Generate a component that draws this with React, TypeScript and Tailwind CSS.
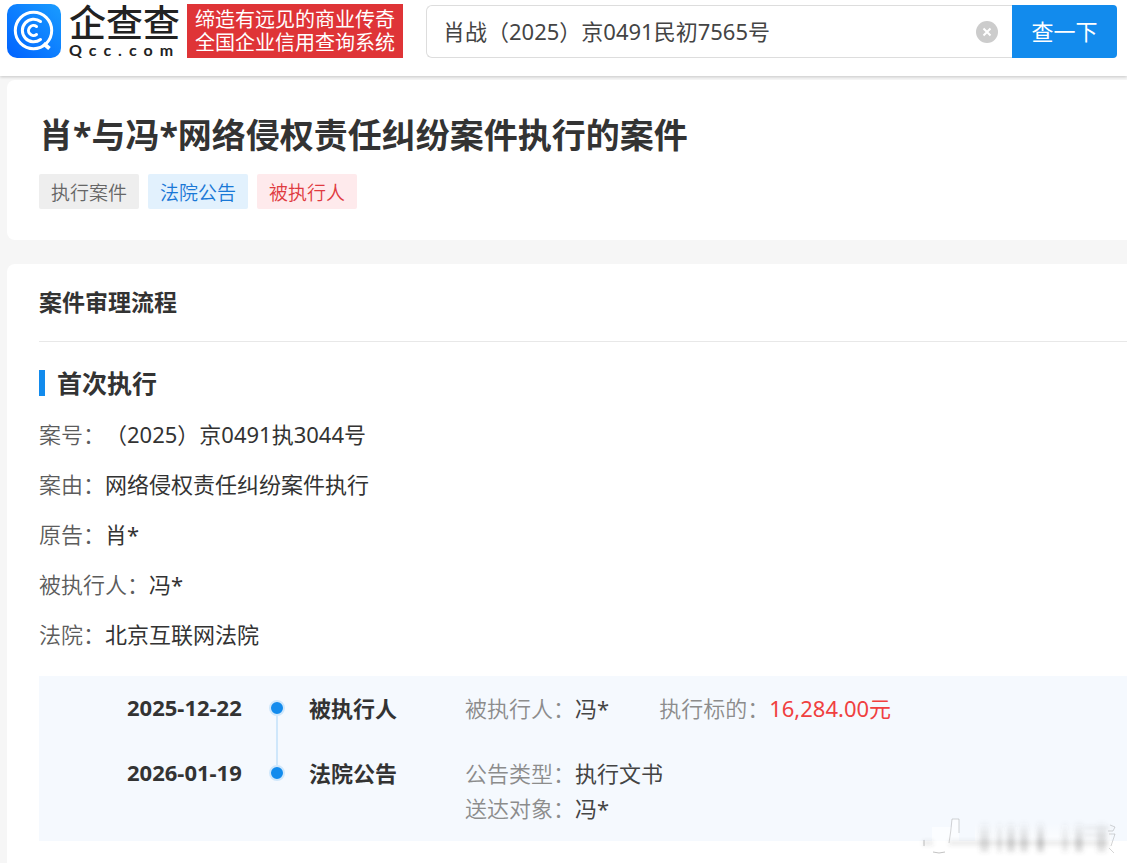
import type { ReactNode } from "react";

const tags = [
  { text: "执行案件", className: "bg-[#eeeeee] text-[#666666]" },
  { text: "法院公告", className: "bg-[#e2f1fd] text-[#1a78d6]" },
  { text: "被执行人", className: "bg-[#feeaec] text-[#e03a40]" },
];

const details = [
  { label: "案号", value: "（2025）京0491执3044号" },
  { label: "案由", value: "网络侵权责任纠纷案件执行" },
  { label: "原告", value: "肖*" },
  { label: "被执行人", value: "冯*" },
  { label: "法院", value: "北京互联网法院" },
];

function Logo() {
  return (
    <a
      href="#"
      className="flex w-[173px] shrink-0 items-start gap-2 whitespace-nowrap"
      aria-label="企查查"
    >
      <svg viewBox="0 0 54 54" className="size-[54px] shrink-0" fill="none">
        <defs>
          <linearGradient id="logo-bg" x1="0" y1="1" x2="1" y2="0">
            <stop offset="0" stopColor="#0062ff" />
            <stop offset="1" stopColor="#1a9cff" />
          </linearGradient>
        </defs>
        <rect width="54" height="54" rx="10" fill="url(#logo-bg)" />
        <g stroke="#fff" strokeWidth="3">
          <circle cx="26.5" cy="26.5" r="18.2" />
          <path d="M36.5 39.5L42.5 44.5" strokeWidth="4" />
          <g strokeLinecap="round">
            <path d="M33.5 17.5A11.3 11.3 0 1 0 33.5 35.5" />
            <path d="M29.5 22.5A5 5 0 1 0 29.5 30.5" />
          </g>
        </g>
      </svg>
      <span className="flex flex-col text-[#222222]">
        <span className="text-[37px] leading-[38px] font-medium">企查查</span>
        <span className="font-[Lato] text-[16px] leading-4 font-bold tracking-[7px]">
          Qcc.com
        </span>
      </span>
    </a>
  );
}

function Header() {
  return (
    <header className="relative flex h-[76px] items-start bg-white pt-1 pr-2.5 pl-[7px] shadow-[0_1px_3px_rgba(0,0,0,0.2)]">
      <Logo />
      <p className="ml-[7px] h-[54px] w-[216px] shrink-0 bg-[#df3437] pt-1 text-center text-[20px] leading-[23px] whitespace-nowrap text-white">
        缔造有远见的商业传奇
        <br />
        全国企业信用查询系统
      </p>
      <form className="mt-px ml-[23px] flex h-[53px] min-w-0 flex-1">
        <div className="flex min-w-0 flex-1 items-center rounded-l-md border border-r-0 border-[#dddddd] pr-3.5 pl-4">
          <input
            type="text"
            aria-label="搜索"
            defaultValue="肖战（2025）京0491民初7565号"
            className="h-full min-w-0 flex-1 pb-[3px] text-[22px] text-[#444444] outline-none"
          />
          <button type="button" aria-label="清除">
            <svg viewBox="0 0 22 22" className="size-[22px]">
              <circle cx="11" cy="11" r="11" fill="#cccccc" />
              <path d="M7.5 7.5l7 7M14.5 7.5l-7 7" stroke="#fff" strokeWidth="2" />
            </svg>
          </button>
        </div>
        <button
          type="submit"
          className="w-[105px] shrink-0 rounded-r-sm bg-[#128bed] text-[22px] text-white"
        >
          查一下
        </button>
      </form>
    </header>
  );
}

function Field({ label, children }: { label: string; children: ReactNode }) {
  return (
    <div className="flex">
      <dt className="font-[350] text-[#8c8c8c]">{label}：</dt>
      <dd className="text-[#444444]">{children}</dd>
    </div>
  );
}

function TimelineItem({
  date,
  title,
  last,
  children,
}: {
  date: string;
  title: string;
  last?: boolean;
  children: ReactNode;
}) {
  return (
    <li className="flex min-h-[65px]">
      <time className="w-[118px] shrink-0 leading-8 font-bold text-[#333333]">
        {date}
      </time>
      <div className="ml-6 flex w-4 shrink-0 flex-col items-center pt-[9px]">
        <span className="size-4 shrink-0 rounded-full border-2 border-[#cfe7fb] bg-[#128bed]" />
        {!last && <span className="-mb-[9px] w-0.5 flex-1 bg-[#cfe7fb]" />}
      </div>
      <h4 className="ml-6 w-[156px] shrink-0 font-bold text-[#333333]">{title}</h4>
      <dl className="flex flex-wrap gap-x-[50px]">{children}</dl>
    </li>
  );
}

// The repeated page code that lies faintly across everything
function Watermark() {
  const marks: { x: number; y: number }[] = [];
  for (let i = -10; i < 18; i++) {
    for (let j = -5; j < 6; j++) {
      const x = 685 + i * 87 - j * 245;
      const y = 490 + i * 87 + j * 72;
      if (x > -120 && x < 1127 && y > 80 && y < 980) marks.push({ x, y });
    }
  }
  return (
    <svg
      className="pointer-events-none absolute inset-0 size-full"
      aria-hidden="true"
      fill="#000"
      fillOpacity="0.02"
      fontSize="22"
    >
      {marks.map(({ x, y }) => (
        <text key={`${x}-${y}`} transform={`translate(${x + 8} ${y + 4}) rotate(-47)`}>
          E&nbsp; E&nbsp; 6&nbsp; 3&nbsp; F&nbsp; 0&nbsp; F
        </text>
      ))}
    </svg>
  );
}

function CornerMark() {
  const bars = [
    [61, 9, 0.2],
    [78, 5, 0.18],
    [88, 8, 0.24],
    [101, 8, 0.22],
    [118, 7, 0.28],
    [143, 6, 0.14],
    [156, 8, 0.24],
    [178, 9, 0.2],
  ];
  return (
    <svg
      viewBox="0 0 200 44"
      className="pointer-events-none absolute right-2 bottom-2 h-11 w-[200px]"
      aria-hidden="true"
      fill="none"
    >
      <defs>
        <filter id="soft" x="-20%" y="-20%" width="140%" height="140%">
          <feGaussianBlur stdDeviation="2" />
        </filter>
        <linearGradient id="fade" x1="0" y1="0" x2="0" y2="1">
          <stop offset="0" stopColor="#555" stopOpacity="0" />
          <stop offset="0.7" stopColor="#555" />
          <stop offset="1" stopColor="#555" stopOpacity="0.7" />
        </linearGradient>
        <linearGradient id="white-fade" x1="0" y1="0" x2="0" y2="1">
          <stop offset="0" stopColor="#fff" stopOpacity="0" />
          <stop offset="0.6" stopColor="#fff" />
        </linearGradient>
      </defs>
      <path d="M56 10h136v30H56z" fill="url(#white-fade)" fillOpacity="0.7" />
      <path d="M13 14h20V6h7v24H30q-1 8-4 10-7 1-11 0-2-4-2-10z" fill="#fff" fillOpacity="0.6" />
      <g filter="url(#soft)">
        {bars.map(([x, w, o]) => (
          <rect key={x} x={x} y="8" width={w} height="31" fill="url(#fade)" opacity={o} />
        ))}
        <path d="M4 30h10M30 30h160" stroke="#555" strokeOpacity="0.14" strokeWidth="4" />
        <path d="M165 15h26M165 22h24" stroke="#555" strokeOpacity="0.16" strokeWidth="2" />
      </g>
      <path d="M5 27v6M14 39q6 2 12 0" stroke="#666" strokeOpacity="0.4" />
      <path d="M30 30q2-12 3-24h7v14" stroke="#888" strokeOpacity="0.35" />
      <path d="M191 12l5 2-2 4h-5M190 21h6l-4 12M190 35l5 5" stroke="#888" strokeOpacity="0.35" />
    </svg>
  );
}

export default function App() {
  return (
    <div className="relative min-h-screen overflow-hidden bg-[#f6f6f6] font-['Noto_Sans','Noto_Sans_CJK_SC',sans-serif]">
      <Header />

      <main className="mt-1 ml-[7px] flex flex-col gap-6">
        <section className="rounded-l-lg bg-white px-8 pt-8 pb-[31px]">
          <h1 className="text-[34px] leading-[46px] font-bold text-[#333333]">
            肖*与冯*网络侵权责任纠纷案件执行的案件
          </h1>
          <ul className="mt-4 flex gap-[9px]">
            {tags.map((tag) => (
              <li
                key={tag.text}
                className={`rounded-xs px-3 pt-[3px] text-[19px] leading-8 font-[350] ${tag.className}`}
              >
                {tag.text}
              </li>
            ))}
          </ul>
        </section>

        <section className="rounded-tl-lg bg-white pb-6 pl-8">
          <h2 className="border-b border-[#e8e8e8] text-[23px] leading-[77px] font-bold text-[#333333]">
            案件审理流程
          </h2>

          <h3 className="mt-7 flex items-center gap-3 text-[25px] leading-[26px] font-bold text-[#333333]">
            <span className="h-[26px] w-1.5 bg-[#128bed]" />
            首次执行
          </h3>

          <dl className="mt-[13px] text-[22px] leading-[50px]">
            {details.map((item) => (
              <div key={item.label} className="flex">
                <dt className="font-[350] text-[#5c5c5c]">{item.label}：</dt>
                <dd className="text-[#333333]">{item.value}</dd>
              </div>
            ))}
          </dl>

          <ol className="mt-[17px] bg-[#f5f9fe] py-[15px] pl-[88px] text-[22px] leading-[35px]">
            <TimelineItem date="2025-12-22" title="被执行人">
              <Field label="被执行人">冯*</Field>
              <Field label="执行标的">
                <span className="text-[#f04040]">16,284.00元</span>
              </Field>
            </TimelineItem>
            <TimelineItem date="2026-01-19" title="法院公告" last>
              <div>
                <Field label="公告类型">执行文书</Field>
                <Field label="送达对象">冯*</Field>
              </div>
            </TimelineItem>
          </ol>
        </section>
      </main>

      <Watermark />
      <CornerMark />
    </div>
  );
}
